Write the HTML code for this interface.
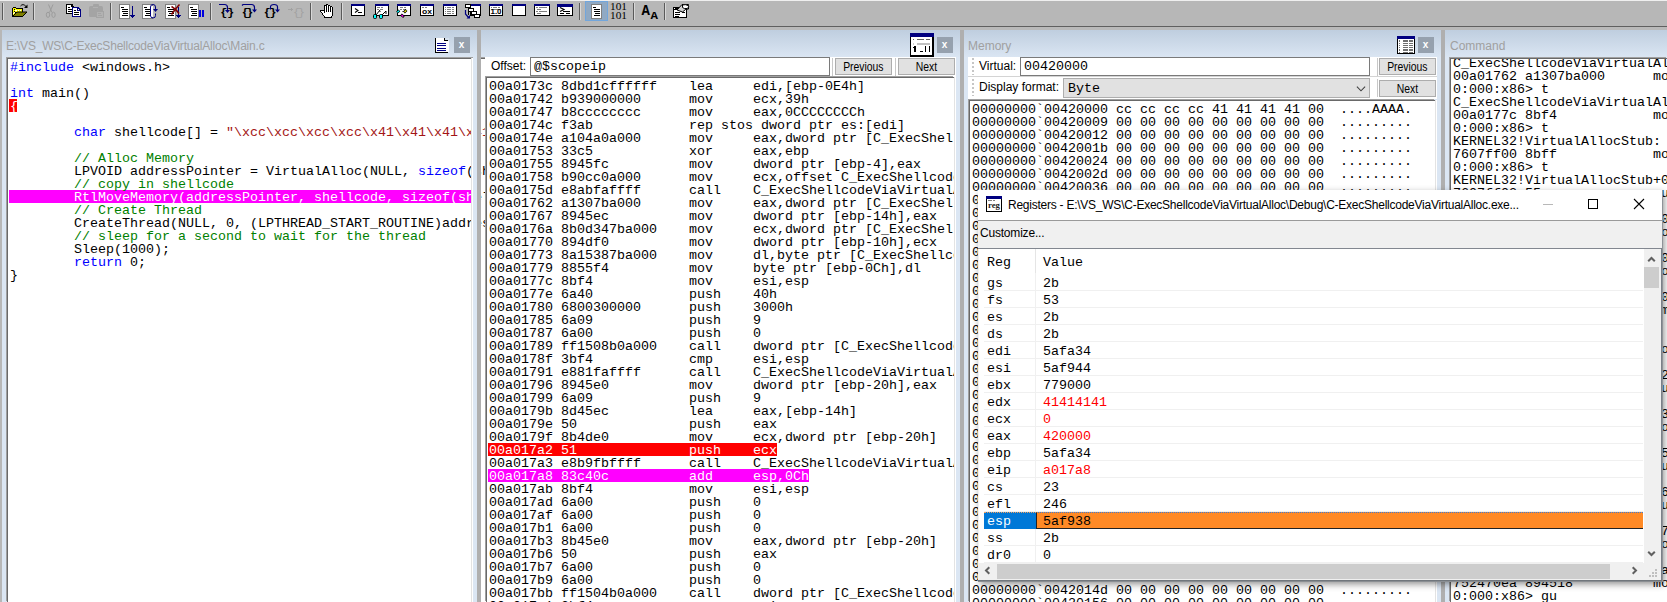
<!DOCTYPE html><html><head><meta charset="utf-8"><title>WinDbg</title><style>
*{box-sizing:border-box;margin:0;padding:0}
html,body{width:1667px;height:602px;overflow:hidden;background:#b7b7b7}
body{position:relative;font-family:"Liberation Sans",sans-serif;font-size:12px;color:#000}
.abs{position:absolute}
.mono{font-family:"Liberation Mono",monospace;font-size:13.333px;line-height:13px;white-space:pre;color:#000}
.cap{position:absolute;top:30px;height:28px;background:linear-gradient(#bfcedf,#dbe6f3)}
.ttl{position:absolute;top:38px;font-size:12px;line-height:16px;color:#a0a0a0;white-space:pre}
.split{position:absolute;top:30px;height:572px;background:#afafaf}
.pane{position:absolute;background:#fff;overflow:hidden;border-top:1px solid #696969;border-left:1px solid #696969;box-shadow:-1px -1px 0 #a0a0a0, 1px 0 0 #e3e3e3, 2px 0 0 #fff}
.pane pre{position:absolute}
.x{position:absolute;width:16px;height:16px;background:#96a1ae;color:#fff;font-size:10px;font-weight:bold;line-height:15px;text-align:center;text-indent:-1px}
.btn{position:absolute;background:#e1e1e1;border:1px solid #adadad;font-size:12px;line-height:17px;text-align:center}
.lbl{position:absolute;font-size:12px;line-height:16px;white-space:pre}
.inp{position:absolute;background:#fff;border:1px solid #7a7a7a}
.row{position:absolute;background:#fff}
.sq{display:inline-block;transform:scaleX(.865);transform-origin:50% 50%}
.kw{color:#0000ff}.cm{color:#008000}.st{color:#a31515}
.hl{color:#fff}
.red{color:#ff0000}
</style></head><body>
<div class="abs" id="tb" style="left:0;top:0;width:1667px;height:27px;background:#b7b7b7;border-top:1px solid #efefef;border-bottom:1px solid #5f5f5f"></div>
<div class="abs" style="left:0;top:27px;width:1667px;height:3px;background:#b9b9b9"></div>
<svg class="abs" style="left:0;top:0" width="700" height="26" viewBox="0 0 700 26" shape-rendering="crispEdges"><rect x="2" y="3" width="1" height="17" fill="#5a5a5a"/><rect x="3" y="3" width="1" height="17" fill="#d8d8d8"/><rect x="33" y="3" width="1" height="17" fill="#5a5a5a"/><rect x="34" y="3" width="1" height="17" fill="#d8d8d8"/><rect x="110" y="3" width="1" height="17" fill="#5a5a5a"/><rect x="111" y="3" width="1" height="17" fill="#d8d8d8"/><rect x="210" y="3" width="1" height="17" fill="#5a5a5a"/><rect x="211" y="3" width="1" height="17" fill="#d8d8d8"/><rect x="310" y="3" width="1" height="17" fill="#5a5a5a"/><rect x="311" y="3" width="1" height="17" fill="#d8d8d8"/><rect x="341" y="3" width="1" height="17" fill="#5a5a5a"/><rect x="342" y="3" width="1" height="17" fill="#d8d8d8"/><rect x="579" y="3" width="1" height="17" fill="#5a5a5a"/><rect x="580" y="3" width="1" height="17" fill="#d8d8d8"/><rect x="633" y="3" width="1" height="17" fill="#5a5a5a"/><rect x="634" y="3" width="1" height="17" fill="#d8d8d8"/><rect x="664" y="3" width="1" height="17" fill="#5a5a5a"/><rect x="665" y="3" width="1" height="17" fill="#d8d8d8"/><rect x="12" y="8" width="11" height="9" fill="#000"/><rect x="13" y="7" width="3" height="1" fill="#000"/><rect x="13" y="9" width="9" height="3" fill="#ffff00"/><rect x="13" y="8" width="3" height="1" fill="#ffff00"/><rect x="13" y="12" width="2" height="4" fill="#ffff00"/><rect x="14" y="9" width="1" height="1" fill="#fff"/><rect x="14" y="11" width="1" height="1" fill="#fff"/><rect x="15" y="10" width="1" height="1" fill="#fff"/><rect x="16" y="10" width="1" height="1" fill="#fff"/><rect x="18" y="10" width="1" height="1" fill="#fff"/><rect x="20" y="10" width="1" height="1" fill="#fff"/><rect x="13" y="13" width="1" height="1" fill="#fff"/><rect x="14" y="12" width="1" height="1" fill="#fff"/><rect x="14" y="9" width="1" height="1" fill="#000"/><rect x="14" y="11" width="1" height="1" fill="#000"/><g shape-rendering="geometricPrecision"><path d="M12.5 16.5l4.5-4.5h10l-4.5 4.5z" stroke="#000" stroke-width="1" fill="#808000" /><path d="M20.5 6q2.5-3 5.5 0.5" stroke="#000" stroke-width="1" fill="none" /><path d="M24 8h3.5V4.5z" stroke="#000" stroke-width="0" fill="#000" /></g><g shape-rendering="geometricPrecision"><path d="M48.5 4.5l3.5 8M53 4.5l-3.5 8" stroke="#9c9c9c" stroke-width="1" fill="none" /><ellipse cx="48" cy="14.8" rx="1.7" ry="2.6" fill="none" stroke="#9c9c9c"/><ellipse cx="53.5" cy="14.8" rx="1.7" ry="2.6" fill="none" stroke="#9c9c9c"/></g><path d="M66.5 4.5H72L73.5 6.5V13.5H66.5Z" stroke="#000" stroke-width="1" fill="#fff" /><rect x="71" y="5" width="1" height="2" fill="#000"/><rect x="72" y="6" width="1" height="1" fill="#000"/><rect x="68" y="7" width="2" height="1" fill="#000"/><rect x="68" y="9" width="4" height="1" fill="#000"/><rect x="68" y="11" width="4" height="1" fill="#000"/><rect x="72" y="7" width="7" height="1" fill="#000080"/><rect x="72" y="7" width="1" height="10" fill="#000080"/><rect x="72" y="16" width="9" height="1" fill="#000080"/><rect x="80" y="10" width="1" height="7" fill="#000080"/><rect x="73" y="8" width="7" height="8" fill="#fff"/><rect x="79" y="8" width="1" height="1" fill="#000080"/><rect x="80" y="9" width="1" height="1" fill="#000080"/><rect x="77" y="8" width="1" height="3" fill="#000080"/><rect x="77" y="10" width="3" height="1" fill="#000080"/><rect x="79" y="9" width="1" height="1" fill="#000080"/><rect x="78" y="8" width="1" height="1" fill="#000080"/><rect x="78" y="9" width="1" height="1" fill="#fff"/><rect x="74" y="10" width="2" height="1" fill="#000"/><rect x="74" y="12" width="5" height="1" fill="#000"/><rect x="74" y="14" width="5" height="1" fill="#000"/><g shape-rendering="geometricPrecision"><rect x="89" y="6" width="14" height="11" rx="1.5" fill="#a4a4a4"/><rect x="93" y="4" width="6" height="3" rx="1" fill="#a4a4a4"/><rect x="96.5" y="11.5" width="7" height="6" fill="#b2b2b2" stroke="#a4a4a4"/></g><rect x="93" y="7" width="5" height="1" fill="#b2b2b2"/><rect x="98" y="13" width="3" height="1" fill="#a4a4a4"/><rect x="98" y="15" width="4" height="1" fill="#a4a4a4"/><rect x="119" y="4" width="11" height="15" fill="#808080"/><rect x="120" y="5" width="9" height="13" fill="#fff"/><rect x="121" y="7" width="3" height="1" fill="#000"/><rect x="122" y="9" width="6" height="1" fill="#000"/><rect x="122" y="11" width="6" height="1" fill="#000"/><rect x="123" y="13" width="5" height="1" fill="#000"/><rect x="122" y="15" width="6" height="1" fill="#000"/><rect x="132" y="6" width="1" height="11" fill="#000080"/><rect x="130" y="15" width="5" height="1" fill="#000080"/><rect x="131" y="16" width="3" height="1" fill="#000080"/><rect x="132" y="17" width="1" height="1" fill="#000080"/><rect x="142" y="4" width="11" height="15" fill="#808080"/><rect x="143" y="5" width="9" height="13" fill="#fff"/><rect x="144" y="7" width="3" height="1" fill="#000"/><rect x="145" y="9" width="6" height="1" fill="#000"/><rect x="145" y="11" width="6" height="1" fill="#000"/><rect x="146" y="13" width="5" height="1" fill="#000"/><rect x="145" y="15" width="6" height="1" fill="#000"/><rect x="151" y="6" width="2" height="11" fill="#fff"/><g shape-rendering="geometricPrecision"><path d="M155.5 9V7q0-2.5-2.5-2.5q-2.5 0-2.5 2.5v8.5q0 2.5 2.5 2.5q2.5 0 2.5-2.5V13.5" stroke="#000080" stroke-width="1" fill="none" /><path d="M153 9h5l-2.5 3z" stroke="#000080" stroke-width="0" fill="#000080" /></g><rect x="165" y="4" width="11" height="15" fill="#808080"/><rect x="166" y="5" width="9" height="13" fill="#fff"/><rect x="167" y="7" width="3" height="1" fill="#000"/><rect x="168" y="9" width="6" height="1" fill="#000"/><rect x="168" y="11" width="6" height="1" fill="#000"/><rect x="169" y="13" width="5" height="1" fill="#000"/><rect x="168" y="15" width="6" height="1" fill="#000"/><rect x="178" y="7" width="1" height="10" fill="#000080"/><rect x="176" y="15" width="5" height="1" fill="#000080"/><rect x="177" y="16" width="3" height="1" fill="#000080"/><rect x="178" y="17" width="1" height="1" fill="#000080"/><g shape-rendering="geometricPrecision"><path d="M171.5 6.5q4 2 7.5 7M179.5 4.5q-4 4-8 10" stroke="#800000" stroke-width="1.6" fill="none" /></g><rect x="188" y="4" width="11" height="15" fill="#808080"/><rect x="189" y="5" width="9" height="13" fill="#fff"/><rect x="190" y="7" width="3" height="1" fill="#000"/><rect x="191" y="9" width="6" height="1" fill="#000"/><rect x="191" y="11" width="6" height="1" fill="#000"/><rect x="192" y="13" width="5" height="1" fill="#000"/><rect x="191" y="15" width="6" height="1" fill="#000"/><rect x="199" y="10" width="2" height="7" fill="#0000e0"/><rect x="202" y="10" width="2" height="7" fill="#0000e0"/><text x="220.3" y="15.6" font-family="Liberation Mono,monospace" font-weight="bold" font-size="11.6" fill="#000">{}</text><g shape-rendering="geometricPrecision"><path d="M219 4.5h5.5q3 0 3 3V10" stroke="#000080" stroke-width="1.2" fill="none" /><path d="M225 10h5l-2.5 3z" stroke="#000080" stroke-width="0" fill="#000080" /></g><text x="241.8" y="15.6" font-family="Liberation Mono,monospace" font-weight="bold" font-size="11.6" letter-spacing="-2.6" fill="#000">{}</text><g shape-rendering="geometricPrecision"><path d="M242 5.5l1-1h8.5q3 0 3 3V10" stroke="#000080" stroke-width="1.2" fill="none" /><path d="M252 9.5h5l-2.5 3z" stroke="#000080" stroke-width="0" fill="#000080" /></g><text x="263.8" y="15.6" font-family="Liberation Mono,monospace" font-weight="bold" font-size="11.6" letter-spacing="-1.3" fill="#000">{}</text><g shape-rendering="geometricPrecision"><path d="M270.5 9.5V7q0-2.5 3.5-2.5t3.5 2.5V10" stroke="#000080" stroke-width="1.2" fill="none" /><path d="M275 9.5h5l-2.5 3z" stroke="#000080" stroke-width="0" fill="#000080" /></g><text x="293" y="15.6" font-family="Liberation Mono,monospace" font-size="11.6" letter-spacing="-2" fill="#a2a2a2">{}</text><rect x="288" y="9" width="5" height="1" fill="#a2a2a2"/><rect x="291" y="8" width="1" height="3" fill="#a2a2a2"/><rect x="326" y="4" width="2" height="1" fill="#000"/><rect x="324" y="5" width="3" height="1" fill="#000"/><rect x="327" y="5" width="1" height="1" fill="#fff"/><rect x="328" y="5" width="2" height="1" fill="#000"/><rect x="324" y="6" width="1" height="1" fill="#000"/><rect x="325" y="6" width="1" height="1" fill="#fff"/><rect x="326" y="6" width="1" height="1" fill="#000"/><rect x="327" y="6" width="1" height="1" fill="#fff"/><rect x="328" y="6" width="1" height="1" fill="#000"/><rect x="329" y="6" width="1" height="1" fill="#fff"/><rect x="330" y="6" width="2" height="1" fill="#000"/><rect x="324" y="7" width="1" height="1" fill="#000"/><rect x="325" y="7" width="1" height="1" fill="#fff"/><rect x="326" y="7" width="1" height="1" fill="#000"/><rect x="327" y="7" width="1" height="1" fill="#fff"/><rect x="328" y="7" width="1" height="1" fill="#000"/><rect x="329" y="7" width="1" height="1" fill="#fff"/><rect x="330" y="7" width="1" height="1" fill="#000"/><rect x="331" y="7" width="1" height="1" fill="#fff"/><rect x="332" y="7" width="1" height="1" fill="#000"/><rect x="324" y="8" width="1" height="1" fill="#000"/><rect x="325" y="8" width="1" height="1" fill="#fff"/><rect x="326" y="8" width="1" height="1" fill="#000"/><rect x="327" y="8" width="1" height="1" fill="#fff"/><rect x="328" y="8" width="1" height="1" fill="#000"/><rect x="329" y="8" width="1" height="1" fill="#fff"/><rect x="330" y="8" width="1" height="1" fill="#000"/><rect x="331" y="8" width="1" height="1" fill="#fff"/><rect x="332" y="8" width="1" height="1" fill="#000"/><rect x="324" y="9" width="1" height="1" fill="#000"/><rect x="325" y="9" width="1" height="1" fill="#fff"/><rect x="326" y="9" width="1" height="1" fill="#000"/><rect x="327" y="9" width="1" height="1" fill="#fff"/><rect x="328" y="9" width="1" height="1" fill="#000"/><rect x="329" y="9" width="1" height="1" fill="#fff"/><rect x="330" y="9" width="1" height="1" fill="#000"/><rect x="331" y="9" width="1" height="1" fill="#fff"/><rect x="332" y="9" width="1" height="1" fill="#000"/><rect x="320" y="10" width="5" height="1" fill="#000"/><rect x="325" y="10" width="1" height="1" fill="#fff"/><rect x="326" y="10" width="1" height="1" fill="#000"/><rect x="327" y="10" width="1" height="1" fill="#fff"/><rect x="328" y="10" width="1" height="1" fill="#000"/><rect x="329" y="10" width="1" height="1" fill="#fff"/><rect x="330" y="10" width="1" height="1" fill="#000"/><rect x="331" y="10" width="1" height="1" fill="#fff"/><rect x="332" y="10" width="1" height="1" fill="#000"/><rect x="320" y="11" width="1" height="1" fill="#000"/><rect x="321" y="11" width="3" height="1" fill="#fff"/><rect x="324" y="11" width="1" height="1" fill="#000"/><rect x="325" y="11" width="1" height="1" fill="#fff"/><rect x="326" y="11" width="1" height="1" fill="#000"/><rect x="327" y="11" width="1" height="1" fill="#fff"/><rect x="328" y="11" width="1" height="1" fill="#000"/><rect x="329" y="11" width="1" height="1" fill="#fff"/><rect x="330" y="11" width="1" height="1" fill="#000"/><rect x="331" y="11" width="1" height="1" fill="#fff"/><rect x="332" y="11" width="1" height="1" fill="#000"/><rect x="321" y="12" width="1" height="1" fill="#000"/><rect x="322" y="12" width="2" height="1" fill="#fff"/><rect x="324" y="12" width="1" height="1" fill="#000"/><rect x="325" y="12" width="7" height="1" fill="#fff"/><rect x="332" y="12" width="1" height="1" fill="#000"/><rect x="322" y="13" width="1" height="1" fill="#000"/><rect x="323" y="13" width="9" height="1" fill="#fff"/><rect x="332" y="13" width="1" height="1" fill="#000"/><rect x="322" y="14" width="1" height="1" fill="#000"/><rect x="323" y="14" width="9" height="1" fill="#fff"/><rect x="332" y="14" width="1" height="1" fill="#000"/><rect x="323" y="15" width="1" height="1" fill="#000"/><rect x="324" y="15" width="8" height="1" fill="#fff"/><rect x="332" y="15" width="1" height="1" fill="#000"/><rect x="324" y="16" width="1" height="1" fill="#000"/><rect x="325" y="16" width="6" height="1" fill="#fff"/><rect x="331" y="16" width="1" height="1" fill="#000"/><rect x="324" y="17" width="8" height="1" fill="#000"/><rect x="351" y="4" width="14" height="12" fill="#000"/><rect x="352" y="6" width="12" height="9" fill="#fff"/><rect x="351" y="4" width="14" height="2" fill="#000080"/><g shape-rendering="geometricPrecision"><path d="M355 8.5l3 2-3 2" stroke="#000" stroke-width="1.1" fill="none" /></g><rect x="358" y="12" width="4" height="1" fill="#000"/><rect x="375" y="4" width="14" height="12" fill="#000"/><rect x="376" y="6" width="12" height="9" fill="#fff"/><rect x="375" y="4" width="14" height="2" fill="#000080"/><rect x="377" y="7" width="3" height="1" fill="#808080"/><rect x="381" y="7" width="2" height="1" fill="#808080"/><rect x="377" y="9" width="2" height="1" fill="#808080"/><rect x="380" y="9" width="3" height="1" fill="#808080"/><rect x="379" y="11" width="2" height="1" fill="#808080"/><g shape-rendering="geometricPrecision"><path d="M376 15l4-5M382 15l4-4v3" stroke="#000" stroke-width="1" fill="none" /><rect x="373.5" y="14.5" width="3" height="4" rx="1" fill="#00ffff" stroke="#000"/><rect x="379.5" y="14.5" width="3" height="4" rx="1" fill="#00ffff" stroke="#000"/><path d="M376.5 15.5h3" stroke="#000" stroke-width="1" fill="none" /></g><rect x="397" y="4" width="14" height="12" fill="#000"/><rect x="398" y="6" width="12" height="9" fill="#fff"/><rect x="397" y="4" width="14" height="2" fill="#000080"/><rect x="400" y="7" width="3" height="1" fill="#808080"/><rect x="404" y="7" width="2" height="1" fill="#808080"/><rect x="400" y="9" width="2" height="1" fill="#808080"/><rect x="403" y="9" width="3" height="1" fill="#808080"/><rect x="402" y="11" width="2" height="1" fill="#808080"/><g shape-rendering="geometricPrecision"><path d="M397 12.5l2.5-2M401 14.5l3 2.5M404 12.5l2.5-2.5" stroke="#000" stroke-width="2.6" fill="none" /><path d="M397.3 12.2l1.8-1.5" stroke="#00ffff" stroke-width="1.2" fill="none" /><path d="M401.5 15l1.8 1.5" stroke="#ff00ff" stroke-width="1.2" fill="none" /><path d="M404.5 12.2l1.8-1.8" stroke="#ffff00" stroke-width="1.2" fill="none" /></g><rect x="420" y="4" width="14" height="12" fill="#000"/><rect x="421" y="6" width="12" height="9" fill="#fff"/><rect x="420" y="4" width="14" height="2" fill="#000080"/><rect x="422" y="7" width="2" height="1" fill="#808080"/><rect x="425" y="7" width="2" height="1" fill="#808080"/><text x="422" y="14" font-family="Liberation Sans,sans-serif" font-weight="bold" font-size="8" textLength="10" lengthAdjust="spacingAndGlyphs" fill="#000">ox</text><rect x="443" y="4" width="14" height="12" fill="#000"/><rect x="444" y="6" width="12" height="9" fill="#fff"/><rect x="443" y="4" width="14" height="2" fill="#000080"/><rect x="445" y="7" width="1" height="1" fill="#808080"/><rect x="447" y="7" width="4" height="1" fill="#808080"/><rect x="452" y="7" width="2" height="1" fill="#808080"/><rect x="445" y="9" width="1" height="1" fill="#808080"/><rect x="447" y="9" width="4" height="1" fill="#808080"/><rect x="452" y="9" width="2" height="1" fill="#808080"/><rect x="445" y="11" width="1" height="1" fill="#808080"/><rect x="447" y="11" width="4" height="1" fill="#808080"/><rect x="452" y="11" width="2" height="1" fill="#808080"/><rect x="445" y="13" width="1" height="1" fill="#808080"/><rect x="447" y="13" width="4" height="1" fill="#808080"/><rect x="452" y="13" width="2" height="1" fill="#808080"/><rect x="470" y="4" width="11" height="12" fill="#000"/><rect x="470" y="4" width="11" height="2" fill="#000080"/><rect x="471" y="6" width="9" height="9" fill="#fff"/><rect x="465" y="4" width="6" height="4" fill="#000"/><rect x="466" y="5" width="4" height="2" fill="#fff"/><rect x="468" y="8" width="6" height="4" fill="#000"/><rect x="469" y="9" width="4" height="2" fill="#fff"/><rect x="471" y="11" width="6" height="4" fill="#000"/><rect x="472" y="12" width="4" height="2" fill="#fff"/><rect x="474" y="14" width="6" height="4" fill="#000"/><rect x="475" y="15" width="4" height="2" fill="#fff"/><rect x="468" y="12" width="1" height="3" fill="#000"/><g shape-rendering="geometricPrecision"><path d="M465.5 10v4l3 3.5" stroke="#000080" stroke-width="1.2" fill="none" /><path d="M466.5 18.5h3.5v-3.5z" stroke="#000080" stroke-width="0" fill="#000080" /></g><rect x="489" y="4" width="14" height="12" fill="#000"/><rect x="490" y="6" width="12" height="9" fill="#fff"/><rect x="489" y="4" width="14" height="2" fill="#000080"/><rect x="491" y="7" width="1" height="1" fill="#808080"/><rect x="493" y="7" width="4" height="1" fill="#808080"/><rect x="498" y="7" width="2" height="1" fill="#808080"/><rect x="491" y="9" width="10" height="1" fill="#808080"/><text x="490.5" y="14.3" font-family="Liberation Sans,sans-serif" font-weight="bold" font-size="7.5" textLength="11" lengthAdjust="spacingAndGlyphs" fill="#000">1.0</text><rect x="512" y="4" width="14" height="12" fill="#000"/><rect x="513" y="6" width="12" height="9" fill="#fff"/><rect x="512" y="4" width="14" height="2" fill="#000080"/><rect x="534" y="4" width="16" height="12" fill="#000"/><rect x="535" y="6" width="14" height="9" fill="#fff"/><rect x="534" y="4" width="16" height="2" fill="#000080"/><rect x="536" y="7" width="2" height="1" fill="#808080"/><rect x="539" y="7" width="8" height="1" fill="#808080"/><rect x="537" y="9" width="4" height="1" fill="#808080"/><rect x="536" y="11" width="2" height="1" fill="#808080"/><rect x="539" y="11" width="8" height="1" fill="#808080"/><rect x="537" y="13" width="4" height="1" fill="#808080"/><rect x="557" y="4" width="16" height="12" fill="#000"/><rect x="558" y="7" width="14" height="8" fill="#fff"/><rect x="557" y="4" width="16" height="3" fill="#000080"/><g shape-rendering="geometricPrecision"><path d="M560 7.5l4 2-4 2" stroke="#000" stroke-width="1.2" fill="none" /></g><rect x="563" y="11" width="7" height="1" fill="#000"/><rect x="560" y="13" width="4" height="1" fill="#000"/><rect x="566" y="13" width="4" height="1" fill="#000"/><rect x="585" y="1" width="23" height="20" fill="#72a6dc"/><rect x="586" y="2" width="21" height="18" fill="#90a9c3"/><rect x="591" y="4" width="11" height="15" fill="#808080"/><rect x="592" y="5" width="9" height="13" fill="#fff"/><rect x="593" y="7" width="3" height="1" fill="#000"/><rect x="594" y="9" width="6" height="1" fill="#000"/><rect x="594" y="11" width="6" height="1" fill="#000"/><rect x="595" y="13" width="5" height="1" fill="#000"/><rect x="594" y="15" width="6" height="1" fill="#000"/><text x="610" y="10" font-family="Liberation Serif,serif" font-size="9.5" textLength="17" lengthAdjust="spacingAndGlyphs" fill="#000">101</text><text x="610" y="19" font-family="Liberation Serif,serif" font-size="9.5" textLength="17" lengthAdjust="spacingAndGlyphs" fill="#000">101</text><text x="641.5" y="15" font-family="Liberation Mono,monospace" font-weight="bold" font-size="14" fill="#000">A</text><text x="650.5" y="19" font-family="Liberation Mono,monospace" font-weight="bold" font-size="10" textLength="7.5" lengthAdjust="spacingAndGlyphs" fill="#000">A</text><rect x="673" y="7" width="14" height="11" fill="#000"/><rect x="674" y="10" width="12" height="7" fill="#fff"/><rect x="674" y="8" width="1" height="1" fill="#fff"/><rect x="675" y="12" width="5" height="1" fill="#000"/><rect x="675" y="14" width="5" height="1" fill="#000"/><rect x="682" y="12" width="3" height="1" fill="#000"/><rect x="675" y="16" width="4" height="1" fill="#000"/><g shape-rendering="geometricPrecision"><path d="M677 10l5-5.5h6.5v4.5l-3 0.5-3 2.5z" stroke="#000" stroke-width="1" fill="#d0d0d0" /><path d="M682.5 5q3-1 5.5 0.5t-1 3q-3 0.5-4.5-1z" stroke="#000" stroke-width="1" fill="#fff" /></g></svg>
<div class="cap" style="left:2px;width:1665px"></div>
<div class="abs" style="left:2px;top:57px;width:1665px;height:545px;background:#dbe6f3"></div>
<div class="split" style="left:477px;width:4px"></div>
<div class="split" style="left:960px;width:4px"></div>
<div class="split" style="left:1441px;width:4px"></div>
<div class="ttl" style="left:6px;letter-spacing:-0.2px">E:\VS_WS\C-ExecShellcodeViaVirtualAlloc\Main.c</div>
<svg class="abs" style="left:435px;top:38px" width="14" height="15" viewBox="0 0 14 15" shape-rendering="crispEdges"><rect x="0" y="0" width="13" height="15" fill="#000"/><rect x="1" y="0" width="13" height="14" fill="#fff"/><rect x="9" y="0" width="5" height="3" fill="#d5e0ed"/><rect x="9" y="0" width="1" height="3" fill="#000"/><rect x="9" y="2" width="4" height="1" fill="#000"/><rect x="2" y="5" width="9" height="1" fill="#000080"/><rect x="2" y="7" width="9" height="1" fill="#000080"/><rect x="2" y="10" width="9" height="1" fill="#000080"/><rect x="2" y="12" width="9" height="1" fill="#000080"/></svg>
<div class="x" style="left:454px;top:37px">x</div>
<div class="pane" style="left:7px;top:58px;width:479px;height:544px">
<div class="abs" style="left:1px;top:131px;width:464px;height:13px;background:#ff00ff"></div>
<div class="abs" style="left:1px;top:40px;width:8px;height:13px;background:#ff0000"></div>
<pre class="mono" style="left:2px;top:2px">
<span class="kw">#include</span> &lt;windows.h&gt;

<span class="kw">int</span> main()
<span class="hl">{</span>

        <span class="kw">char</span> shellcode[] = <span class="st">"\xcc\xcc\xcc\xcc\x41\x41\x41\x41";</span>

        <span class="cm">// Alloc Memory</span>
        LPVOID addressPointer = VirtualAlloc(NULL, <span class="kw">sizeof</span>(shellcode), MEM_COMMIT, PAGE_EXECUTE_READWRITE);
        <span class="cm">// copy in shellcode</span>
<span class="hl">        RtlMoveMemory(addressPointer, shellcode, sizeof(sh</span>ellcode));
        <span class="cm">// Create Thread</span>
        CreateThread(NULL, 0, (LPTHREAD_START_ROUTINE)addressPointer, NULL, 0, 0);
        <span class="cm">// sleep for a second to wait for the thread</span>
        Sleep(1000);
        <span class="kw">return</span> 0;
}
</pre></div>
<div class="abs" style="left:471px;top:58px;width:1px;height:544px;background:#e3e3e3"></div><div class="abs" style="left:472px;top:58px;width:1px;height:544px;background:#fff"></div><div class="abs" style="left:473px;top:57px;width:4px;height:545px;background:#dbe6f3"></div><div class="split" style="left:477px;width:4px"></div>
<svg class="abs" style="left:910px;top:33px" width="24" height="24" viewBox="0 0 24 24" shape-rendering="crispEdges"><rect width="24" height="24" fill="#000"/><rect x="1" y="4" width="21" height="18" fill="#fff"/><rect width="24" height="4" fill="#000080"/><rect x="3" y="6" width="1" height="1" fill="#606060"/><rect x="7" y="6" width="7" height="1" fill="#606060"/><rect x="16" y="6" width="4" height="1" fill="#606060"/><rect x="3" y="10" width="1" height="2" fill="#d0d0d0"/><rect x="7" y="10" width="13" height="2" fill="#c0c0c0"/><rect x="4" y="13" width="2" height="6" fill="#000"/><rect x="3" y="14" width="1" height="1" fill="#000"/><rect x="10" y="18" width="3" height="1" fill="#000"/><rect x="15" y="13" width="1" height="6" fill="#000"/><rect x="19" y="13" width="1" height="6" fill="#000"/></svg>
<div class="x" style="left:937px;top:37px">x</div>
<div class="row" style="left:485px;top:57px;width:471px;height:20px"></div>
<div class="lbl" style="left:491px;top:58px">Offset:</div>
<div class="inp mono" style="left:530px;top:57px;width:300px;height:19px;line-height:18px;padding-left:3px">@$scopeip</div>
<div class="abs" style="left:832px;top:58px;width:1px;height:18px;background:#c8c8c8"></div>
<div class="btn" style="left:835px;top:58px;width:57px;height:17px"><span class="sq">Previous</span></div>
<div class="abs" style="left:895px;top:58px;width:1px;height:18px;background:#c8c8c8"></div>
<div class="btn" style="left:898px;top:58px;width:57px;height:17px"><span class="sq">Next</span></div>
<div class="pane" style="left:486px;top:77px;width:468px;height:525px">
<div class="abs" style="left:1px;top:365px;width:289px;height:13px;background:#ff0000"></div>
<div class="abs" style="left:1px;top:391px;width:321px;height:13px;background:#ff00ff"></div>
<pre class="mono" style="left:2px;top:2px">
00a0173c 8dbd1cffffff    lea     edi,[ebp-0E4h]
00a01742 b939000000      mov     ecx,39h
00a01747 b8cccccccc      mov     eax,0CCCCCCCCh
00a0174c f3ab            rep stos dword ptr es:[edi]
00a0174e a104a0a000      mov     eax,dword ptr [C_ExecShellcodeViaVirtualAlloc!__security_cookie (00a0a004)]
00a01753 33c5            xor     eax,ebp
00a01755 8945fc          mov     dword ptr [ebp-4],eax
00a01758 b90cc0a000      mov     ecx,offset C_ExecShellcodeViaVirtualAlloc!__NULL_IMPORT_DESCRIPTOR (00a0c00c)
00a0175d e8abfaffff      call    C_ExecShellcodeViaVirtualAlloc!ILT+520(__CheckForDebuggerJustMyCode) (00a0120d)
00a01762 a1307ba000      mov     eax,dword ptr [C_ExecShellcodeViaVirtualAlloc!`string' (00a07b30)]
00a01767 8945ec          mov     dword ptr [ebp-14h],eax
00a0176a 8b0d347ba000    mov     ecx,dword ptr [C_ExecShellcodeViaVirtualAlloc!`string'+0x4 (00a07b34)]
00a01770 894df0          mov     dword ptr [ebp-10h],ecx
00a01773 8a15387ba000    mov     dl,byte ptr [C_ExecShellcodeViaVirtualAlloc!`string'+0x8 (00a07b38)]
00a01779 8855f4          mov     byte ptr [ebp-0Ch],dl
00a0177c 8bf4            mov     esi,esp
00a0177e 6a40            push    40h
00a01780 6800300000      push    3000h
00a01785 6a09            push    9
00a01787 6a00            push    0
00a01789 ff1508b0a000    call    dword ptr [C_ExecShellcodeViaVirtualAlloc!_imp__VirtualAlloc (00a0b008)]
00a0178f 3bf4            cmp     esi,esp
00a01791 e881faffff      call    C_ExecShellcodeViaVirtualAlloc!ILT+530(__RTC_CheckEsp) (00a01217)
00a01796 8945e0          mov     dword ptr [ebp-20h],eax
00a01799 6a09            push    9
00a0179b 8d45ec          lea     eax,[ebp-14h]
00a0179e 50              push    eax
00a0179f 8b4de0          mov     ecx,dword ptr [ebp-20h]
<span class="hl">00a017a2 51              push    ecx</span>
00a017a3 e8b9fbffff      call    C_ExecShellcodeViaVirtualAlloc!ILT+860(_memmove) (00a01361)
<span class="hl">00a017a8 83c40c          add     esp,0Ch</span>
00a017ab 8bf4            mov     esi,esp
00a017ad 6a00            push    0
00a017af 6a00            push    0
00a017b1 6a00            push    0
00a017b3 8b45e0          mov     eax,dword ptr [ebp-20h]
00a017b6 50              push    eax
00a017b7 6a00            push    0
00a017b9 6a00            push    0
00a017bb ff1504b0a000    call    dword ptr [C_ExecShellcodeViaVirtualAlloc!_imp__CreateThread (00a0b004)]
00a017c1 3bf4            cmp     esi,esp
</pre></div>
<div class="ttl" style="left:968px">Memory</div>
<svg class="abs" style="left:1397px;top:36px" width="18" height="18" viewBox="0 0 18 18" shape-rendering="crispEdges"><rect width="18" height="18" fill="#000"/><rect x="1" y="3" width="16" height="14" fill="#fff"/><rect width="18" height="3" fill="#000080"/><rect x="2" y="4" width="1" height="2" fill="#707070"/><rect x="6" y="4" width="5" height="2" fill="#707070"/><rect x="12" y="4" width="4" height="2" fill="#707070"/><rect x="2" y="7" width="1" height="1" fill="#707070"/><rect x="6" y="7" width="5" height="1" fill="#707070"/><rect x="12" y="7" width="4" height="1" fill="#707070"/><rect x="2" y="9" width="1" height="1" fill="#707070"/><rect x="6" y="9" width="5" height="1" fill="#707070"/><rect x="12" y="9" width="4" height="1" fill="#707070"/><rect x="2" y="11" width="1" height="1" fill="#707070"/><rect x="6" y="11" width="5" height="1" fill="#707070"/><rect x="12" y="11" width="4" height="1" fill="#707070"/><rect x="2" y="13" width="1" height="2" fill="#707070"/><rect x="6" y="13" width="5" height="2" fill="#707070"/><rect x="12" y="13" width="4" height="2" fill="#707070"/><rect x="2" y="16" width="1" height="1" fill="#707070"/><rect x="6" y="16" width="5" height="1" fill="#707070"/><rect x="12" y="16" width="4" height="1" fill="#707070"/></svg>
<div class="x" style="left:1418px;top:37px">x</div>
<div class="row" style="left:968px;top:57px;width:469px;height:42px"></div>
<div class="abs" style="left:968px;top:76px;width:469px;height:1px;background:#d4d4d4"></div>
<div class="lbl" style="left:979px;top:58px">Virtual:</div>
<div class="inp mono" style="left:1020px;top:57px;width:350px;height:19px;line-height:18px;padding-left:3px">00420000</div>
<div class="lbl" style="left:979px;top:79px">Display format:</div>
<div class="inp mono" style="left:1063px;top:78px;width:307px;height:20px;line-height:20px;padding-left:4px;background:#e1e1e1;border-color:#adadad">Byte</div>
<svg class="abs" style="left:1356px;top:86px" width="10" height="6" viewBox="0 0 10 6"><path d="M0.9 0.7L5 4.8L9.1 0.7" fill="none" stroke="#404040" stroke-width="1.1"/></svg>
<div class="abs" style="left:1377px;top:58px;width:1px;height:18px;background:#c8c8c8"></div>
<div class="abs" style="left:1377px;top:79px;width:1px;height:18px;background:#c8c8c8"></div>
<div class="btn" style="left:1379px;top:58px;width:57px;height:17px"><span class="sq">Previous</span></div>
<div class="btn" style="left:1379px;top:80px;width:57px;height:17px"><span class="sq">Next</span></div>
<div class="abs" style="left:972px;top:58px;width:2px;height:17px;background:repeating-linear-gradient(#c6c6c6 0 2px,#fff 2px 4px)"></div>
<div class="abs" style="left:972px;top:79px;width:2px;height:17px;background:repeating-linear-gradient(#c6c6c6 0 2px,#fff 2px 4px)"></div>
<div class="pane" style="left:969px;top:100px;width:466px;height:502px">
<pre class="mono" style="left:2px;top:2px">
00000000`00420000 cc cc cc cc 41 41 41 41 00  ....AAAA.
00000000`00420009 00 00 00 00 00 00 00 00 00  .........
00000000`00420012 00 00 00 00 00 00 00 00 00  .........
00000000`0042001b 00 00 00 00 00 00 00 00 00  .........
00000000`00420024 00 00 00 00 00 00 00 00 00  .........
00000000`0042002d 00 00 00 00 00 00 00 00 00  .........
00000000`00420036 00 00 00 00 00 00 00 00 00  .........
00000000`0042003f 00 00 00 00 00 00 00 00 00  .........
00000000`00420048 00 00 00 00 00 00 00 00 00  .........
00000000`00420051 00 00 00 00 00 00 00 00 00  .........
00000000`0042005a 00 00 00 00 00 00 00 00 00  .........
00000000`00420063 00 00 00 00 00 00 00 00 00  .........
00000000`0042006c 00 00 00 00 00 00 00 00 00  .........
00000000`00420075 00 00 00 00 00 00 00 00 00  .........
00000000`0042007e 00 00 00 00 00 00 00 00 00  .........
00000000`00420087 00 00 00 00 00 00 00 00 00  .........
00000000`00420090 00 00 00 00 00 00 00 00 00  .........
00000000`00420099 00 00 00 00 00 00 00 00 00  .........
00000000`004200a2 00 00 00 00 00 00 00 00 00  .........
00000000`004200ab 00 00 00 00 00 00 00 00 00  .........
00000000`004200b4 00 00 00 00 00 00 00 00 00  .........
00000000`004200bd 00 00 00 00 00 00 00 00 00  .........
00000000`004200c6 00 00 00 00 00 00 00 00 00  .........
00000000`004200cf 00 00 00 00 00 00 00 00 00  .........
00000000`004200d8 00 00 00 00 00 00 00 00 00  .........
00000000`004200e1 00 00 00 00 00 00 00 00 00  .........
00000000`004200ea 00 00 00 00 00 00 00 00 00  .........
00000000`004200f3 00 00 00 00 00 00 00 00 00  .........
00000000`004200fc 00 00 00 00 00 00 00 00 00  .........
00000000`00420105 00 00 00 00 00 00 00 00 00  .........
00000000`0042010e 00 00 00 00 00 00 00 00 00  .........
00000000`00420117 00 00 00 00 00 00 00 00 00  .........
00000000`00420120 00 00 00 00 00 00 00 00 00  .........
00000000`00420129 00 00 00 00 00 00 00 00 00  .........
00000000`00420132 00 00 00 00 00 00 00 00 00  .........
00000000`0042013b 00 00 00 00 00 00 00 00 00  .........
00000000`00420144 00 00 00 00 00 00 00 00 00  .........
00000000`0042014d 00 00 00 00 00 00 00 00 00  .........
00000000`00420156 00 00 00 00 00 00 00 00 00  .........
00000000`0042015f 00 00 00 00 00 00 00 00 00  .........
</pre></div>
<div class="ttl" style="left:1450px">Command</div>
<div class="pane" style="left:1450px;top:58px;width:217px;height:544px">
<pre class="mono" style="left:2px;top:-2px">
C_ExecShellcodeViaVirtualAlloc!main+0x52:
00a01762 a1307ba000      mov     eax,dword ptr
0:000:x86&gt; t
C_ExecShellcodeViaVirtualAlloc!main+0x6c:
00a0177c 8bf4            mov     esi,esp
0:000:x86&gt; t
KERNEL32!VirtualAllocStub:
7607ff00 8bff            mov     edi,edi
0:000:x86&gt; t
KERNEL32!VirtualAllocStub+0x2:
7607ff02 55              push    ebp
0:000:x86&gt; t
KERNEL32!VirtualAllocStub+0x3:
7607ff03 8bec            mov     ebp,esp
0:000:x86&gt; t
KERNEL32!VirtualAllocStub+0x5:
7607ff05 5d              pop     ebp
0:000:x86&gt; t
KERNEL32!VirtualAllocStub+0x6:
7607ff06 ff2504130e76    jmp     dword ptr
0:000:x86&gt; t
KERNELBASE!VirtualAlloc:
752470d0 8bff            mov     edi,edi
0:000:x86&gt; t
KERNELBASE!VirtualAlloc+0x2:
752470d2 55              push    ebp
0:000:x86&gt; t
KERNELBASE!VirtualAlloc+0x3:
752470d3 8bec            mov     ebp,esp
0:000:x86&gt; t
KERNELBASE!VirtualAlloc+0x5:
752470d5 51              push    ecx
0:000:x86&gt; t
KERNELBASE!VirtualAlloc+0x6:
752470d6 51              push    ecx
0:000:x86&gt; t
KERNELBASE!VirtualAlloc+0x7:
752470d7 8b450c          mov     eax,dword ptr
0:000:x86&gt; t
KERNELBASE!VirtualAlloc+0xa:
752470ea 894518          mov     dword ptr [ebp
0:000:x86&gt; gu
C_ExecShellcodeViaVirtualAlloc!main+0x7f:
</pre></div>
<div class="abs" style="left:978px;top:190px;width:684px;height:391px;background:#fff;box-shadow:2px 3px 7px rgba(0,0,0,.45)"></div>
<svg class="abs" style="left:986px;top:196px" width="16" height="16" viewBox="0 0 16 16" shape-rendering="crispEdges"><rect width="16" height="16" fill="#000"/><rect x="1" y="3" width="14" height="12" fill="#fff"/><rect width="16" height="3" fill="#000080"/><rect x="2" y="4" width="4" height="1" fill="#808080"/><rect x="7" y="4" width="2" height="1" fill="#808080"/><text x="2" y="11.5" font-family="Liberation Serif,serif" font-weight="bold" font-size="8" textLength="12" lengthAdjust="spacingAndGlyphs" fill="#222">reg</text></svg>
<div class="lbl" style="left:1008px;top:197px;letter-spacing:-0.245px">Registers - E:\VS_WS\C-ExecShellcodeViaVirtualAlloc\Debug\C-ExecShellcodeViaVirtualAlloc.exe...</div>
<svg class="abs" style="left:1520px;top:190px" width="140" height="30" viewBox="0 0 140 30"><path d="M23 14.5h10" stroke="#b8b8b8" stroke-width="1"/><rect x="68.5" y="9.5" width="9" height="9" fill="none" stroke="#000" stroke-width="1"/><path d="M114 9l10 10M124 9l-10 10" stroke="#000" stroke-width="1.1"/></svg>
<div class="abs" style="left:978px;top:220px;width:684px;height:28px;background:#f0f0f0;border-top:1px solid #9a9a9a"></div>
<div class="lbl" style="left:980px;top:225px;letter-spacing:-0.2px">Customize...</div>
<div class="abs" style="left:978px;top:248px;width:684px;height:332px;background:#f0f0f0;border-top:1px solid #828790"></div>
<div class="abs" id="lv" style="left:979px;top:249px;width:665px;height:314px;background:#fff;overflow:hidden">
<div class="abs" style="left:56px;top:0;width:1px;height:24px;background:#e5e5e5"></div>
<div class="abs" style="left:56px;top:24px;width:1px;height:290px;background:#f0f0f0"></div>
<div class="mono abs" style="left:8px;top:7px">Reg</div><div class="mono abs" style="left:64px;top:7px">Value</div>
<div class="abs" style="left:5px;top:41px;width:659px;height:1px;background:#f0f0f0"></div>
<div class="mono abs" style="left:8px;top:28px"><span>gs</span></div><div class="mono abs" style="left:64px;top:28px">2b</div>
<div class="abs" style="left:5px;top:58px;width:659px;height:1px;background:#f0f0f0"></div>
<div class="mono abs" style="left:8px;top:45px"><span>fs</span></div><div class="mono abs" style="left:64px;top:45px">53</div>
<div class="abs" style="left:5px;top:75px;width:659px;height:1px;background:#f0f0f0"></div>
<div class="mono abs" style="left:8px;top:62px"><span>es</span></div><div class="mono abs" style="left:64px;top:62px">2b</div>
<div class="abs" style="left:5px;top:92px;width:659px;height:1px;background:#f0f0f0"></div>
<div class="mono abs" style="left:8px;top:79px"><span>ds</span></div><div class="mono abs" style="left:64px;top:79px">2b</div>
<div class="abs" style="left:5px;top:109px;width:659px;height:1px;background:#f0f0f0"></div>
<div class="mono abs" style="left:8px;top:96px"><span>edi</span></div><div class="mono abs" style="left:64px;top:96px">5afa34</div>
<div class="abs" style="left:5px;top:126px;width:659px;height:1px;background:#f0f0f0"></div>
<div class="mono abs" style="left:8px;top:113px"><span>esi</span></div><div class="mono abs" style="left:64px;top:113px">5af944</div>
<div class="abs" style="left:5px;top:143px;width:659px;height:1px;background:#f0f0f0"></div>
<div class="mono abs" style="left:8px;top:130px"><span>ebx</span></div><div class="mono abs" style="left:64px;top:130px">779000</div>
<div class="abs" style="left:5px;top:160px;width:659px;height:1px;background:#f0f0f0"></div>
<div class="mono abs" style="left:8px;top:147px"><span>edx</span></div><div class="mono abs red" style="left:64px;top:147px">41414141</div>
<div class="abs" style="left:5px;top:177px;width:659px;height:1px;background:#f0f0f0"></div>
<div class="mono abs" style="left:8px;top:164px"><span>ecx</span></div><div class="mono abs red" style="left:64px;top:164px">0</div>
<div class="abs" style="left:5px;top:194px;width:659px;height:1px;background:#f0f0f0"></div>
<div class="mono abs" style="left:8px;top:181px"><span>eax</span></div><div class="mono abs red" style="left:64px;top:181px">420000</div>
<div class="abs" style="left:5px;top:211px;width:659px;height:1px;background:#f0f0f0"></div>
<div class="mono abs" style="left:8px;top:198px"><span>ebp</span></div><div class="mono abs" style="left:64px;top:198px">5afa34</div>
<div class="abs" style="left:5px;top:228px;width:659px;height:1px;background:#f0f0f0"></div>
<div class="mono abs" style="left:8px;top:215px"><span>eip</span></div><div class="mono abs red" style="left:64px;top:215px">a017a8</div>
<div class="abs" style="left:5px;top:245px;width:659px;height:1px;background:#f0f0f0"></div>
<div class="mono abs" style="left:8px;top:232px"><span>cs</span></div><div class="mono abs" style="left:64px;top:232px">23</div>
<div class="abs" style="left:5px;top:262px;width:659px;height:1px;background:#f0f0f0"></div>
<div class="mono abs" style="left:8px;top:249px"><span>efl</span></div><div class="mono abs" style="left:64px;top:249px">246</div>
<div class="abs" style="left:5px;top:263px;width:52px;height:17px;background:#0078d7;border-top:1px dotted #f0a060"></div>
<div class="abs" style="left:57px;top:263px;width:607px;height:17px;background:#ff8a26;border-left:1px solid #222;border-bottom:1px solid #222;border-top:1px dotted #3a7bd5"></div>
<div class="mono abs" style="left:8px;top:266px"><span style="color:#fff">esp</span></div><div class="mono abs" style="left:64px;top:266px">5af938</div>
<div class="abs" style="left:5px;top:296px;width:659px;height:1px;background:#f0f0f0"></div>
<div class="mono abs" style="left:8px;top:283px"><span>ss</span></div><div class="mono abs" style="left:64px;top:283px">2b</div>
<div class="abs" style="left:5px;top:313px;width:659px;height:1px;background:#f0f0f0"></div>
<div class="mono abs" style="left:8px;top:300px"><span>dr0</span></div><div class="mono abs" style="left:64px;top:300px">0</div>
</div>
<div class="abs" style="left:1644px;top:249px;width:17px;height:314px;background:#f0f0f0"></div>
<div class="abs" style="left:1644px;top:267px;width:15px;height:21px;background:#cdcdcd"></div>
<svg class="abs" style="left:1647px;top:255px" width="9" height="8" viewBox="0 0 9 8"><path d="M1.2 6.3L4.5 3L7.8 6.3" fill="none" stroke="#606060" stroke-width="2"/></svg>
<svg class="abs" style="left:1647px;top:550px" width="9" height="8" viewBox="0 0 9 8"><path d="M1.2 1.7L4.5 5L7.8 1.7" fill="none" stroke="#606060" stroke-width="2"/></svg>
<div class="abs" style="left:979px;top:563px;width:682px;height:17px;background:#f0f0f0"></div>
<div class="abs" style="left:997px;top:564px;width:613px;height:15px;background:#cdcdcd"></div>
<svg class="abs" style="left:983px;top:566px" width="8" height="9" viewBox="0 0 8 9"><path d="M6.3 1.2L3 4.5L6.3 7.8" fill="none" stroke="#606060" stroke-width="2"/></svg>
<svg class="abs" style="left:1631px;top:566px" width="8" height="9" viewBox="0 0 8 9"><path d="M1.7 1.2L5 4.5L1.7 7.8" fill="none" stroke="#606060" stroke-width="2"/></svg>
<svg class="abs" style="left:1648px;top:568px" width="10" height="10" viewBox="0 0 10 10" shape-rendering="crispEdges"><g fill="#bfbfbf"><rect x="7" y="1" width="2" height="2"/><rect x="4" y="4" width="2" height="2"/><rect x="7" y="4" width="2" height="2"/><rect x="1" y="7" width="2" height="2"/><rect x="4" y="7" width="2" height="2"/><rect x="7" y="7" width="2" height="2"/></g></svg>
<div class="abs" style="left:1661px;top:248px;width:1px;height:333px;background:#7a8088"></div><div class="abs" style="left:1662px;top:190px;width:1px;height:392px;background:#8f9398"></div>
<div class="abs" style="left:978px;top:580px;width:684px;height:1px;background:#70767c"></div><div class="abs" style="left:978px;top:581px;width:686px;height:1px;background:#8a8e92"></div>
</body></html>
